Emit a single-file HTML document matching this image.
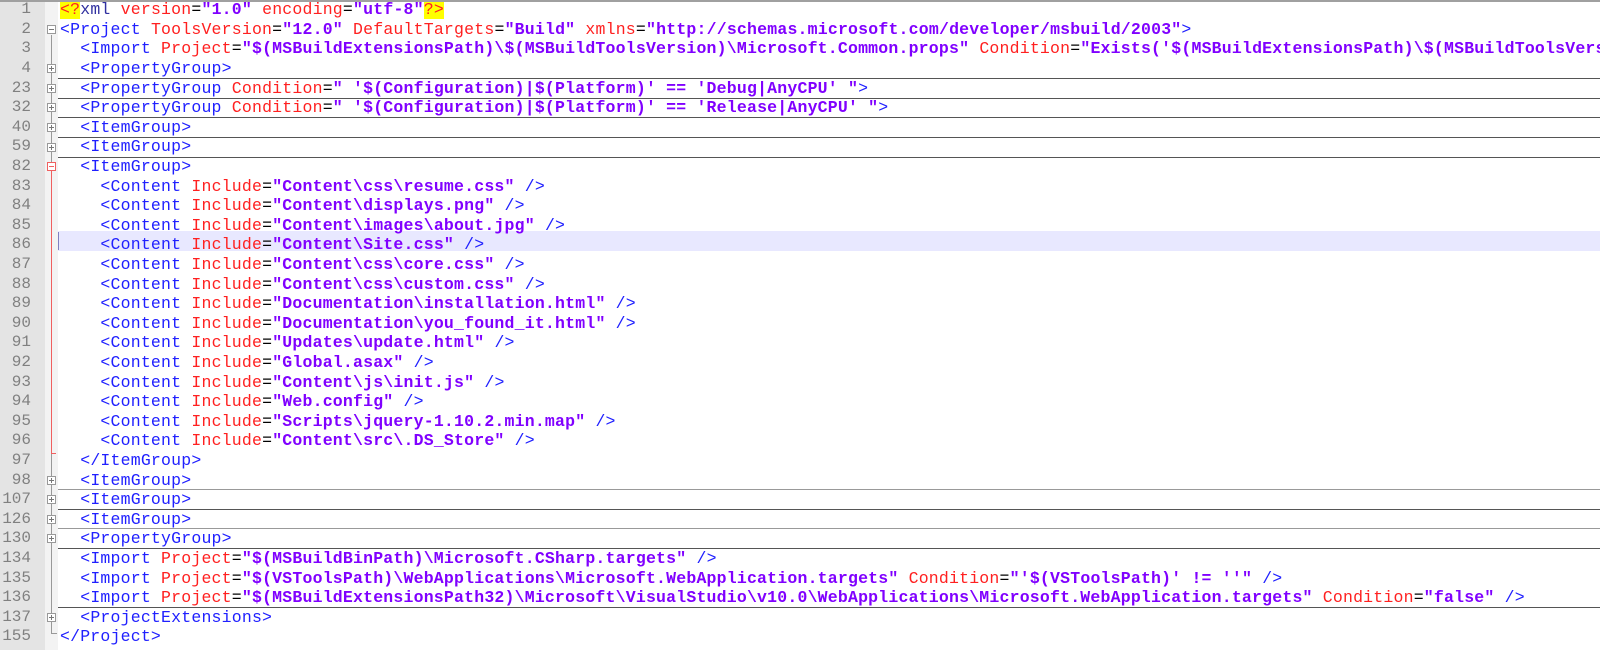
<!DOCTYPE html>
<html><head><meta charset="utf-8"><style>
html,body{margin:0;padding:0;}
body{width:1600px;height:650px;overflow:hidden;background:#fff;position:relative;font-family:"Liberation Mono",monospace;font-size:16.5px;}
#top{position:absolute;left:0;top:0;width:1600px;height:2px;background:#a0a0a0;z-index:5}
#gut{position:absolute;left:0;top:0;width:45px;height:650px;background:#e4e4e4}
#fold{position:absolute;left:45px;top:0;width:13px;height:650px;background:#f3f3f3}
.n{position:absolute;left:0;width:31px;text-align:right;color:#808080;height:19.6px;line-height:19.6px;font-family:"Liberation Mono",monospace;font-size:16px}
.l{position:absolute;left:60px;right:0;overflow:hidden;height:19.6px;line-height:19.6px;white-space:pre;color:#000;letter-spacing:0.2px}
.t{color:#2020ff}.a{color:#ff2020}.v{color:#8000ff;font-weight:bold}
.sep{position:absolute;left:58px;width:1542px;height:1px;background:#555}
.box{position:absolute;left:47px;width:9px;height:9px;border:1px solid #999;background:#fff;box-sizing:border-box}
.box:before{content:"";position:absolute;left:1px;top:3px;width:5px;height:1px;background:#777}
.plus:after{content:"";position:absolute;left:3px;top:1px;width:1px;height:5px;background:#777}
.red{border-color:#f06060}.red:before{background:#f06060}
.vl{position:absolute;left:51px;width:1px;background:#999}
.hl{position:absolute;left:58px;top:231px;width:1542px;height:19.6px;background:#e8e8ff}
.caret{position:absolute;left:58px;top:232px;width:1px;height:18px;background:#8080c0}
</style></head><body>
<div id="top"></div><div id="gut"></div><div id="fold"></div>
<div class="hl"></div><div class="caret"></div>
<div class="vl" style="top:35px;height:599px"></div>
<div class="vl" style="top:633px;height:1px;width:6px"></div>
<div class="vl" style="top:169px;height:284px;background:#f06060"></div>
<div class="vl" style="top:453px;height:1px;width:5px;background:#f06060"></div>
<div class="box" style="top:25px"></div>
<div class="box plus" style="top:64px"></div>
<div class="box plus" style="top:84px"></div>
<div class="box plus" style="top:103px"></div>
<div class="box plus" style="top:123px"></div>
<div class="box plus" style="top:143px"></div>
<div class="box red" style="top:162px"></div>
<div class="box plus" style="top:476px"></div>
<div class="box plus" style="top:495px"></div>
<div class="box plus" style="top:515px"></div>
<div class="box plus" style="top:534px"></div>
<div class="box plus" style="top:613px"></div>
<div class="sep" style="top:78px"></div>
<div class="sep" style="top:98px"></div>
<div class="sep" style="top:117px"></div>
<div class="sep" style="top:137px"></div>
<div class="sep" style="top:157px"></div>
<div class="sep" style="top:489px;background:#999"></div>
<div class="sep" style="top:509px"></div>
<div class="sep" style="top:528px;background:#999"></div>
<div class="sep" style="top:548px"></div>
<div class="sep" style="top:607px"></div>

<div class="n" style="top:0.2px">1</div><div class="l" style="top:0.2px"><span class="a" style="background:#ffff00">&lt;?</span><span style="color:#3030a0">xml</span> <span class="a">version</span>=<span class="v">"1.0"</span> <span class="a">encoding</span>=<span class="v">"utf-8"</span><span class="a" style="background:#ffff00">?&gt;</span></div>
<div class="n" style="top:19.8px">2</div><div class="l" style="top:19.8px"><span class="t">&lt;Project</span> <span class="a">ToolsVersion</span>=<span class="v">"12.0"</span> <span class="a">DefaultTargets</span>=<span class="v">"Build"</span> <span class="a">xmlns</span>=<span class="v">"http://schemas.microsoft.com/developer/msbuild/2003"</span><span class="t">&gt;</span></div>
<div class="n" style="top:39.4px">3</div><div class="l" style="top:39.4px">  <span class="t">&lt;Import</span> <span class="a">Project</span>=<span class="v">"$(MSBuildExtensionsPath)\$(MSBuildToolsVersion)\Microsoft.Common.props"</span> <span class="a">Condition</span>=<span class="v">"Exists('$(MSBuildExtensionsPath)\$(MSBuildToolsVersion)\Microsoft.Common.props')"</span></div>
<div class="n" style="top:59px">4</div><div class="l" style="top:59px">  <span class="t">&lt;PropertyGroup&gt;</span></div>
<div class="n" style="top:78.6px">23</div><div class="l" style="top:78.6px">  <span class="t">&lt;PropertyGroup</span> <span class="a">Condition</span>=<span class="v">" '$(Configuration)|$(Platform)' == 'Debug|AnyCPU' "</span><span class="t">&gt;</span></div>
<div class="n" style="top:98.2px">32</div><div class="l" style="top:98.2px">  <span class="t">&lt;PropertyGroup</span> <span class="a">Condition</span>=<span class="v">" '$(Configuration)|$(Platform)' == 'Release|AnyCPU' "</span><span class="t">&gt;</span></div>
<div class="n" style="top:117.8px">40</div><div class="l" style="top:117.8px">  <span class="t">&lt;ItemGroup&gt;</span></div>
<div class="n" style="top:137.4px">59</div><div class="l" style="top:137.4px">  <span class="t">&lt;ItemGroup&gt;</span></div>
<div class="n" style="top:157px">82</div><div class="l" style="top:157px">  <span class="t">&lt;ItemGroup&gt;</span></div>
<div class="n" style="top:176.6px">83</div><div class="l" style="top:176.6px">    <span class="t">&lt;Content</span> <span class="a">Include</span>=<span class="v">"Content\css\resume.css"</span> <span class="t">/&gt;</span></div>
<div class="n" style="top:196.2px">84</div><div class="l" style="top:196.2px">    <span class="t">&lt;Content</span> <span class="a">Include</span>=<span class="v">"Content\displays.png"</span> <span class="t">/&gt;</span></div>
<div class="n" style="top:215.8px">85</div><div class="l" style="top:215.8px">    <span class="t">&lt;Content</span> <span class="a">Include</span>=<span class="v">"Content\images\about.jpg"</span> <span class="t">/&gt;</span></div>
<div class="n" style="top:235.4px">86</div><div class="l" style="top:235.4px">    <span class="t">&lt;Content</span> <span class="a">Include</span>=<span class="v">"Content\Site.css"</span> <span class="t">/&gt;</span></div>
<div class="n" style="top:255px">87</div><div class="l" style="top:255px">    <span class="t">&lt;Content</span> <span class="a">Include</span>=<span class="v">"Content\css\core.css"</span> <span class="t">/&gt;</span></div>
<div class="n" style="top:274.6px">88</div><div class="l" style="top:274.6px">    <span class="t">&lt;Content</span> <span class="a">Include</span>=<span class="v">"Content\css\custom.css"</span> <span class="t">/&gt;</span></div>
<div class="n" style="top:294.2px">89</div><div class="l" style="top:294.2px">    <span class="t">&lt;Content</span> <span class="a">Include</span>=<span class="v">"Documentation\installation.html"</span> <span class="t">/&gt;</span></div>
<div class="n" style="top:313.8px">90</div><div class="l" style="top:313.8px">    <span class="t">&lt;Content</span> <span class="a">Include</span>=<span class="v">"Documentation\you_found_it.html"</span> <span class="t">/&gt;</span></div>
<div class="n" style="top:333.4px">91</div><div class="l" style="top:333.4px">    <span class="t">&lt;Content</span> <span class="a">Include</span>=<span class="v">"Updates\update.html"</span> <span class="t">/&gt;</span></div>
<div class="n" style="top:353px">92</div><div class="l" style="top:353px">    <span class="t">&lt;Content</span> <span class="a">Include</span>=<span class="v">"Global.asax"</span> <span class="t">/&gt;</span></div>
<div class="n" style="top:372.6px">93</div><div class="l" style="top:372.6px">    <span class="t">&lt;Content</span> <span class="a">Include</span>=<span class="v">"Content\js\init.js"</span> <span class="t">/&gt;</span></div>
<div class="n" style="top:392.2px">94</div><div class="l" style="top:392.2px">    <span class="t">&lt;Content</span> <span class="a">Include</span>=<span class="v">"Web.config"</span> <span class="t">/&gt;</span></div>
<div class="n" style="top:411.8px">95</div><div class="l" style="top:411.8px">    <span class="t">&lt;Content</span> <span class="a">Include</span>=<span class="v">"Scripts\jquery-1.10.2.min.map"</span> <span class="t">/&gt;</span></div>
<div class="n" style="top:431.4px">96</div><div class="l" style="top:431.4px">    <span class="t">&lt;Content</span> <span class="a">Include</span>=<span class="v">"Content\src\.DS_Store"</span> <span class="t">/&gt;</span></div>
<div class="n" style="top:451px">97</div><div class="l" style="top:451px">  <span class="t">&lt;/ItemGroup&gt;</span></div>
<div class="n" style="top:470.6px">98</div><div class="l" style="top:470.6px">  <span class="t">&lt;ItemGroup&gt;</span></div>
<div class="n" style="top:490.2px">107</div><div class="l" style="top:490.2px">  <span class="t">&lt;ItemGroup&gt;</span></div>
<div class="n" style="top:509.8px">126</div><div class="l" style="top:509.8px">  <span class="t">&lt;ItemGroup&gt;</span></div>
<div class="n" style="top:529.4px">130</div><div class="l" style="top:529.4px">  <span class="t">&lt;PropertyGroup&gt;</span></div>
<div class="n" style="top:549px">134</div><div class="l" style="top:549px">  <span class="t">&lt;Import</span> <span class="a">Project</span>=<span class="v">"$(MSBuildBinPath)\Microsoft.CSharp.targets"</span> <span class="t">/&gt;</span></div>
<div class="n" style="top:568.6px">135</div><div class="l" style="top:568.6px">  <span class="t">&lt;Import</span> <span class="a">Project</span>=<span class="v">"$(VSToolsPath)\WebApplications\Microsoft.WebApplication.targets"</span> <span class="a">Condition</span>=<span class="v">"'$(VSToolsPath)' != ''"</span> <span class="t">/&gt;</span></div>
<div class="n" style="top:588.2px">136</div><div class="l" style="top:588.2px">  <span class="t">&lt;Import</span> <span class="a">Project</span>=<span class="v">"$(MSBuildExtensionsPath32)\Microsoft\VisualStudio\v10.0\WebApplications\Microsoft.WebApplication.targets"</span> <span class="a">Condition</span>=<span class="v">"false"</span> <span class="t">/&gt;</span></div>
<div class="n" style="top:607.8px">137</div><div class="l" style="top:607.8px">  <span class="t">&lt;ProjectExtensions&gt;</span></div>
<div class="n" style="top:627.4px">155</div><div class="l" style="top:627.4px"><span class="t">&lt;/Project&gt;</span></div>
</body></html>
